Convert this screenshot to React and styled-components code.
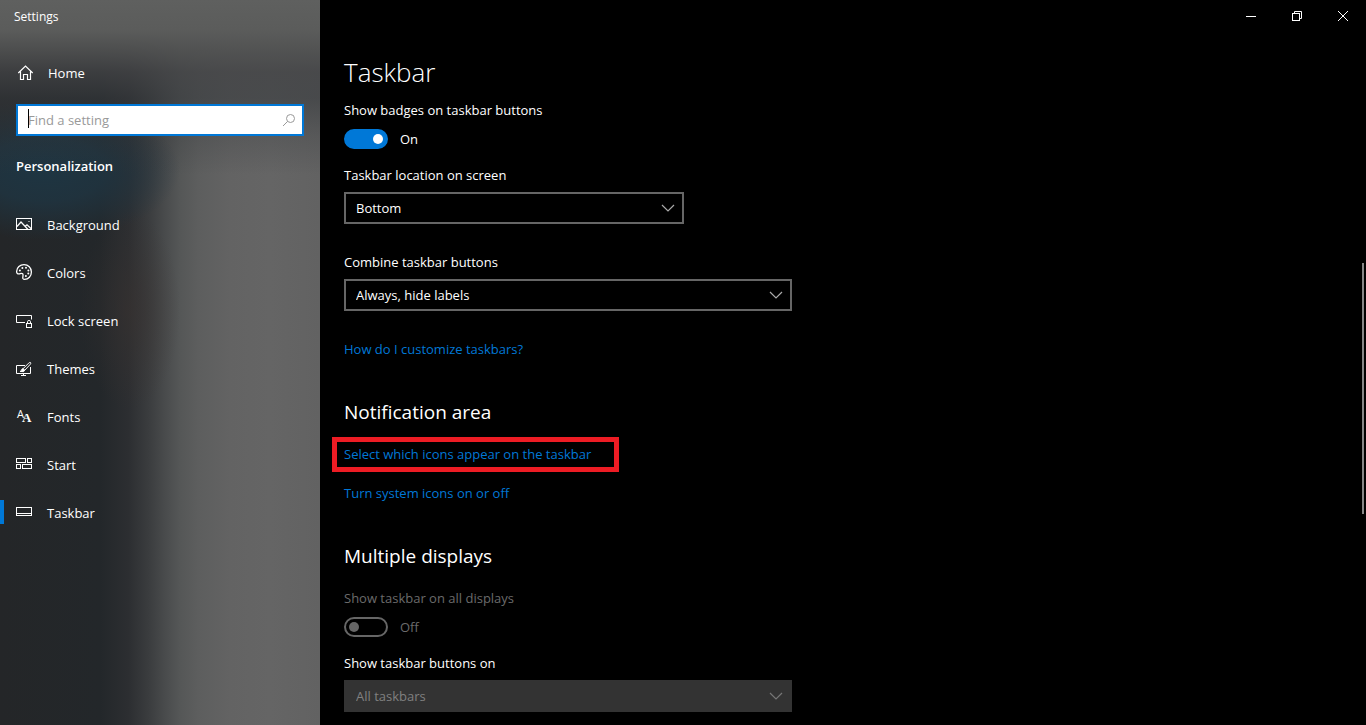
import React from 'react';
import styled, { createGlobalStyle, css } from 'styled-components';

const GlobalStyle = createGlobalStyle`
	* {
		box-sizing: border-box;
	}

	body {
		margin: 0;
		background-color: #000;
		color: #fff;
		font-family: 'Segoe UI', 'Open Sans', 'Noto Sans', sans-serif;
		font-size: 13px;
		line-height: 20px;
	}

	button,
	input,
	select {
		font: inherit;
		color: inherit;
	}
`;

const Window = styled.div`
	display: grid;
	grid-template-columns: 320px 1fr;
	min-height: 100vh;
`;

const Sidebar = styled.aside`
	background:
		linear-gradient(
			180deg,
			#5f605f 0,
			#5b5c5b 30px,
			rgba(80, 81, 81, 0.92) 50px,
			rgba(66, 67, 69, 0.8) 72px,
			rgba(54, 57, 60, 0.6) 98px,
			rgba(54, 57, 60, 0.25) 135px,
			rgba(54, 57, 60, 0) 175px
		),
		radial-gradient(
			ellipse 135px 70px at 45px 170px,
			#1e3542 0,
			rgba(31, 53, 66, 0.8) 45%,
			rgba(31, 53, 66, 0) 100%
		),
		radial-gradient(ellipse 50px 100px at 130px 310px, rgba(58, 50, 47, 0.5) 0, rgba(58, 50, 47, 0) 100%),
		linear-gradient(
			90deg,
			#242628 0,
			#23272a 100px,
			#2c2e31 128px,
			#3a3c3e 148px,
			#494b4c 165px,
			#555757 180px,
			#5d5e5e 198px,
			#636363 230px,
			#656565 270px,
			#626262 100%
		);
`;

const AppTitle = styled.div`
	padding: 7px 14px 5px;
	font-size: 12px;
`;

const HomeLink = styled.a`
	display: flex;
	align-items: center;
	gap: 14px;
	height: 48px;
	margin-top: 17px;
	padding: 0 18px;
	color: #fff;
	text-decoration: none;
`;

const SearchBox = styled.label`
	position: relative;
	display: flex;
	align-items: center;
	height: 32px;
	margin: 7px 16px 0;
	padding: 0 6px 0 10px;
	border: 2px solid #0078d7;
	background-color: #fff;
	color: #999;
`;

const SearchInput = styled.input`
	flex: 1;
	min-width: 0;
	padding: 0;
	border: 0;
	outline: 0;
	background: none;
	color: #000;
	caret-color: transparent;

	&::placeholder {
		color: #999;
		opacity: 1;
	}
`;

const Caret = styled.span`
	position: absolute;
	top: 3px;
	left: 10px;
	width: 1px;
	height: 19px;
	background-color: #000;
`;

const Category = styled.h2`
	margin: 20px 16px 25px;
	font-size: 13px;
	font-weight: 600;
`;

const NavItem = styled.a`
	display: flex;
	align-items: center;
	gap: 15px;
	height: 48px;
	padding: 0 16px;
	color: #fff;
	text-decoration: none;

	${({ $active }) =>
		$active &&
		css`
			background: linear-gradient(#0078d7, #0078d7) 0 11px / 4px 24px no-repeat;
		`}
`;

const Icon = styled.svg`
	flex: none;
	overflow: visible;
	fill: none;
	stroke: currentColor;
	stroke-width: 1;
`;

const NavIcon = styled(Icon)`
	margin-bottom: 2px;
`;

const Pane = styled.div`
	display: flex;
	flex-direction: column;
	background-color: #000;
`;

const WindowControls = styled.div`
	display: flex;
	justify-content: flex-end;
	height: 32px;
`;

const WindowButton = styled.button`
	display: flex;
	align-items: center;
	justify-content: center;
	width: 46px;
	padding: 0;
	border: 0;
	background: none;
`;

const PaneBody = styled.div`
	display: flex;
	flex: 1;
`;

const Content = styled.main`
	flex: 1;
	padding: 22px 24px 12px;
`;

const ScrollTrack = styled.div`
	display: grid;
	grid-template-rows: 231fr 251fr 211fr;
	width: 4px;
`;

const ScrollThumb = styled.div`
	grid-row: 2;
	width: 2px;
	background-color: #868686;
`;

const PageTitle = styled.h1`
	margin: 0 0 10px;
	font-size: 26px;
	font-weight: 300;
	line-height: 36px;
`;

const SectionTitle = styled.h2`
	margin: 39px 0 18px;
	font-size: 19px;
	font-weight: 400;
	line-height: 28px;
`;

const Field = styled.div`
	display: flex;
	flex-direction: column;
	gap: ${({ $gap }) => $gap || 7}px;
	max-width: ${({ $width }) => $width || 448}px;
	margin-top: ${({ $space }) => $space || 0}px;
`;

const Label = styled.label`
	color: ${({ $muted }) => ($muted ? '#6b6b6b' : '#fff')};
`;

const ToggleRow = styled.div`
	display: flex;
	align-items: center;
	gap: 12px;
	height: 20px;
	color: ${({ $muted }) => ($muted ? '#6b6b6b' : '#fff')};
`;

const Switch = styled.input`
	display: flex;
	align-items: center;
	width: 44px;
	height: 20px;
	margin: 0;
	padding: 0 3px;
	appearance: none;
	border: 2px solid #fff;
	border-radius: 10px;

	&::before {
		content: '';
		width: 10px;
		height: 10px;
		border-radius: 50%;
		background-color: #fff;
	}

	&:checked {
		justify-content: flex-end;
		border-color: #0078d7;
		background-color: #0078d7;
	}

	&:disabled {
		border-color: #666;
	}

	&:disabled::before {
		background-color: #666;
	}
`;

const SelectWrap = styled.div`
	display: grid;
	align-items: center;
	color: ${({ $muted }) => ($muted ? '#808080' : '#fff')};

	> * {
		grid-area: 1 / 1;
	}

	svg {
		justify-self: end;
		margin-right: 9px;
		color: ${({ $muted }) => ($muted ? '#777' : '#aaa')};
		pointer-events: none;
	}
`;

const Select = styled.select`
	width: 100%;
	height: 32px;
	padding: 0 30px 0 10px;
	appearance: none;
	border: 2px solid #666;
	border-radius: 0;
	background-color: #000;

	&:disabled {
		border-color: #333;
		background-color: #333;
		opacity: 1;
	}
`;

const Links = styled.div`
	display: flex;
	flex-direction: column;
	align-items: flex-start;
	gap: 19px;
`;

const SettingLink = styled.a`
	position: relative;
	color: #0078d7;
	text-decoration: none;

	${({ $highlighted }) =>
		$highlighted &&
		css`
			&::after {
				content: '';
				position: absolute;
				inset: -7px -28px -8px -12px;
				border: 5px solid #ed1c24;
				pointer-events: none;
			}
		`}
`;

const HelpLinks = styled(Links)`
	margin-top: 28px;
`;

const NAV_ITEMS = [
	{
		name: 'Background',
		icon: (
			<>
				<rect x='0.5' y='2.5' width='15' height='11' />
				<path d='M1 10.5 L5 6 L12 13.5 M9 10.5 L11 8.7 L15.5 13' strokeWidth='1.2' />
				<path d='M12.5 5.5 h1' />
			</>
		),
	},
	{
		name: 'Colors',
		icon: (
			<>
				<path
					strokeWidth='1.3'
					d='M0.6 7.5 C0.8 3.4 4 0.6 8 0.6 C12.2 0.6 15.4 3.8 15.4 8 C15.4 12.2 12.4 15.4 8.6 15.4 C7 15.4 6.6 14.4 6.8 13.2 C7.1 11.7 7.4 10.6 6.7 9.8 C5.8 8.9 4.6 9.6 3.4 9.9 C1.7 10.2 0.6 9.3 0.6 7.5 Z'
				/>
				<g fill='currentColor' stroke='none'>
					<circle cx='3.9' cy='6.6' r='1' />
					<circle cx='6.4' cy='4' r='1' />
					<circle cx='10' cy='3.7' r='1' />
					<circle cx='12.4' cy='6.4' r='1' />
					<circle cx='12.3' cy='9.6' r='1' />
					<circle cx='9.9' cy='12.1' r='1' />
				</g>
			</>
		),
	},
	{
		name: 'Lock screen',
		icon: (
			<>
				<path d='M9 10.5 H0.5 V3.5 H15.5 V7.5' />
				<rect x='10.5' y='11.5' width='5' height='4' />
				<path d='M11.5 11.5 V9.5 Q11.5 8.5 13 8.5 Q14.5 8.5 14.5 9.5 V11.5' />
			</>
		),
	},
	{
		name: 'Themes',
		icon: (
			<>
				<path d='M9 5.5 H0.5 V13.5 H14.5 V7' />
				<path d='M7.5 13.5 V15.5 M5 15.5 H10' />
				<path d='M7.2 8.6 L12.6 3.2 Q14 2 14.6 2.6 Q15.2 3.2 14 4.6 L8.8 10.2 Z' />
				<path d='M7.2 8.6 Q5.6 8.8 5.4 10.4 Q5 11.3 4 11.4 Q8.4 12.6 8.8 10.2' fill='currentColor' />
			</>
		),
	},
	{
		name: 'Fonts',
		icon: (
			<g fill='currentColor' stroke='none'>
				<text x='1' y='10' fontSize='11' fontFamily='Open Sans, sans-serif'>
					A
				</text>
				<text x='6' y='14' fontSize='13' fontWeight='700' fontFamily='Liberation Serif, serif'>
					A
				</text>
			</g>
		),
	},
	{
		name: 'Start',
		icon: (
			<>
				<rect x='0.5' y='2.5' width='9' height='4' />
				<rect x='11.5' y='2.5' width='4' height='4' />
				<rect x='0.5' y='8.5' width='4' height='4' />
				<rect x='6.5' y='8.5' width='9' height='4' />
			</>
		),
	},
	{
		name: 'Taskbar',
		active: true,
		icon: (
			<>
				<rect x='0.5' y='3.5' width='15' height='8' />
				<path d='M0.5 9.5 H15.5' />
			</>
		),
	},
];

const Dropdown = ({ id, label, value, width, space, disabled }) => (
	<Field $width={width} $space={space}>
		<Label htmlFor={id}>{label}</Label>
		<SelectWrap $muted={disabled}>
			<Select id={id} disabled={disabled}>
				<option>{value}</option>
			</Select>
			<Icon width='14' height='8' viewBox='0 0 14 8'>
				<path d='M1 1 L7 7 L13 1' strokeWidth='1.2' />
			</Icon>
		</SelectWrap>
	</Field>
);

const Toggle = ({ id, label, on, disabled }) => (
	<Field $gap={9}>
		<Label htmlFor={id} $muted={disabled}>
			{label}
		</Label>
		<ToggleRow $muted={disabled}>
			<Switch id={id} type='checkbox' defaultChecked={on} disabled={disabled} />
			<span>{on ? 'On' : 'Off'}</span>
		</ToggleRow>
	</Field>
);

const SettingsSidebar = () => (
	<Sidebar>
		<AppTitle>Settings</AppTitle>
		<HomeLink href='#home'>
			<Icon width='16' height='16' viewBox='0 0 16 16'>
				<path
					strokeWidth='1.2'
					d='M0.3 8 L7.5 1 L14.7 8 M2.5 6.5 V14.5 H5.5 V9.5 H9.5 V14.5 H12.5 V6.5'
				/>
			</Icon>
			Home
		</HomeLink>
		<SearchBox>
			<SearchInput type='text' placeholder='Find a setting' aria-label='Find a setting' />
			<Caret />
			<Icon width='14' height='14' viewBox='0 0 14 14'>
				<circle cx='8.5' cy='5.5' r='4' />
				<path d='M5.6 8.4 L1 13' />
			</Icon>
		</SearchBox>
		<Category>Personalization</Category>
		<nav>
			{NAV_ITEMS.map(({ name, icon, active }) => (
				<NavItem key={name} href={`#${name}`} $active={active}>
					<NavIcon width='16' height='16' viewBox='0 0 16 16'>
						{icon}
					</NavIcon>
					{name}
				</NavItem>
			))}
		</nav>
	</Sidebar>
);

const App = () => (
	<>
		<GlobalStyle />
		<Window>
			<SettingsSidebar />
			<Pane>
				<WindowControls>
					<WindowButton type='button' aria-label='Minimize'>
						<Icon width='10' height='10' viewBox='0 0 10 10'>
							<path d='M0 5.5 H10' />
						</Icon>
					</WindowButton>
					<WindowButton type='button' aria-label='Restore'>
						<Icon width='10' height='10' viewBox='0 0 10 10'>
							<rect x='0.5' y='2.5' width='7' height='7' />
							<path d='M2.5 2.5 V0.5 H9.5 V7.5 H7.5' />
						</Icon>
					</WindowButton>
					<WindowButton type='button' aria-label='Close'>
						<Icon width='10' height='10' viewBox='0 0 10 10'>
							<path d='M0 0 L10 10 M10 0 L0 10' />
						</Icon>
					</WindowButton>
				</WindowControls>
				<PaneBody>
					<Content>
						<PageTitle>Taskbar</PageTitle>
						<Toggle id='badges' label='Show badges on taskbar buttons' on />
						<Dropdown
							id='location'
							label='Taskbar location on screen'
							value='Bottom'
							width={340}
							space={16}
						/>
						<Dropdown
							id='combine'
							label='Combine taskbar buttons'
							value='Always, hide labels'
							space={28}
						/>
						<HelpLinks>
							<SettingLink href='#help'>How do I customize taskbars?</SettingLink>
						</HelpLinks>

						<SectionTitle>Notification area</SectionTitle>
						<Links>
							<SettingLink href='#icons' $highlighted>
								Select which icons appear on the taskbar
							</SettingLink>
							<SettingLink href='#system-icons'>Turn system icons on or off</SettingLink>
						</Links>

						<SectionTitle>Multiple displays</SectionTitle>
						<Toggle id='all-displays' label='Show taskbar on all displays' disabled />
						<Dropdown
							id='buttons-on'
							label='Show taskbar buttons on'
							value='All taskbars'
							space={16}
							disabled
						/>
					</Content>
					<ScrollTrack>
						<ScrollThumb />
					</ScrollTrack>
				</PaneBody>
			</Pane>
		</Window>
	</>
);

export default App;
